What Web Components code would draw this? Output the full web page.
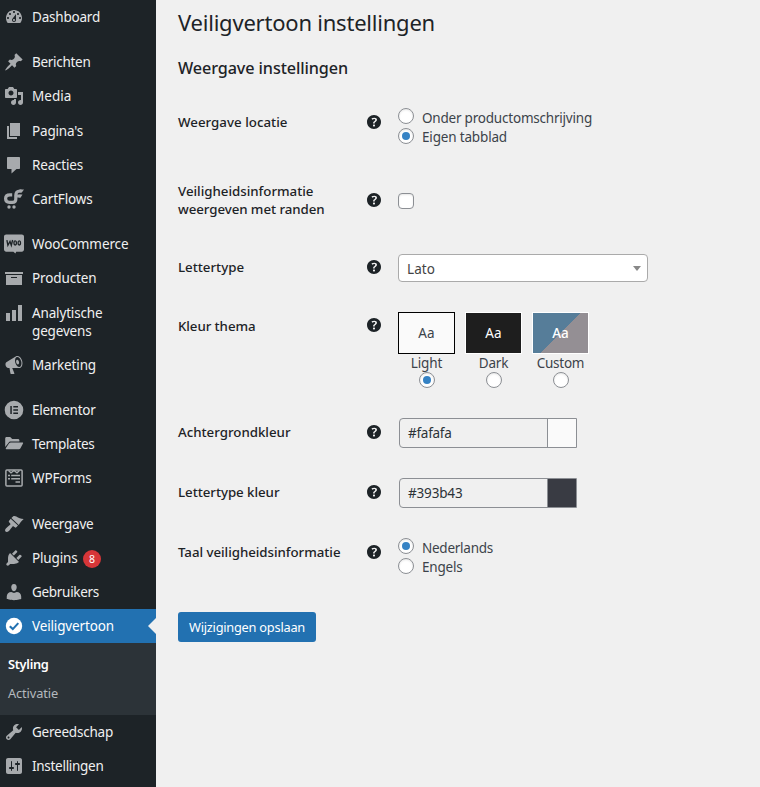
<!DOCTYPE html>
<html lang="nl">
<head>
<meta charset="utf-8">
<title>Veiligvertoon instellingen</title>
<style>
  html, body { margin: 0; height: 787px; overflow: hidden; background: #f0f0f0; }
  body { font: 14px/18px "Noto Sans", "Open Sans", sans-serif; }
</style>
</head>
<body>
<admin-page></admin-page>
<script>
const base = (el, html) => { el.attachShadow({ mode: 'open' }).innerHTML = html; };

/* One line of text spaced to a given advance width. */
customElements.define('ui-text', class extends HTMLElement {
  constructor() {
    super();
    base(this, `<style>:host{display:block;white-space:nowrap}span{display:inline-block}</style><span><slot></slot></span>`);
  }
  connectedCallback() {
    const w = parseFloat(this.getAttribute('w'));
    if (!w) return;
    const span = this.shadowRoot.querySelector('span');
    const now = span.getBoundingClientRect().width;
    this.style.letterSpacing = ((w - now) / this.textContent.length).toFixed(3) + 'px';
  }
});

const ICONS = {
  dashboard: '<path d="M3.76 16h12.48c1.1-1.37 1.76-3.11 1.76-5 0-4.42-3.58-8-8-8s-8 3.58-8 8c0 1.89.66 3.63 1.76 5zM10 4c.55 0 1 .45 1 1s-.45 1-1 1-1-.45-1-1 .45-1 1-1zM6 6c.55 0 1 .45 1 1s-.45 1-1 1-1-.45-1-1 .45-1 1-1zm8 0c.55 0 1 .45 1 1s-.45 1-1 1-1-.45-1-1 .45-1 1-1zm-5.37 5.55L12 7v6c0 1.1-.9 2-2 2s-2-.9-2-2c0-.57.24-1.08.63-1.45zM4 10c.55 0 1 .45 1 1s-.45 1-1 1-1-.45-1-1 .45-1 1-1zm12 0c.55 0 1 .45 1 1s-.45 1-1 1-1-.45-1-1 .45-1 1-1zm-5 3c0-.55-.45-1-1-1s-1 .45-1 1 .45 1 1 1 1-.45 1-1z"/>',
  post: '<path d="M10.44 3.02l1.82-1.82 6.36 6.35-1.83 1.82c-1.05-.68-2.48-.57-3.41.36l-.75.75c-.92.93-1.04 2.35-.35 3.41l-1.83 1.82-2.41-2.41-2.8 2.79c-.42.42-3.38 2.71-3.8 2.29s1.86-3.39 2.28-3.81l2.79-2.79L4.1 9.36l1.83-1.82c1.05.69 2.48.57 3.4-.36l.75-.75c.93-.92 1.05-2.35.36-3.41z"/>',
  media: '<path d="M13 11V4c0-.55-.45-1-1-1h-1.67L9 1H5L3.67 3H2c-.55 0-1 .45-1 1v7c0 .55.45 1 1 1h10c.55 0 1-.45 1-1zM7 4.5c1.38 0 2.5 1.12 2.5 2.5S8.38 9.5 7 9.5 4.5 8.38 4.5 7 5.62 4.5 7 4.5zM14 6h5v10.5c0 1.38-1.12 2.5-2.5 2.5S14 17.88 14 16.5s1.12-2.5 2.5-2.5c.17 0 .34.02.5.05V9h-3V6zm-4 8.05V13h2v3.5c0 1.38-1.12 2.5-2.5 2.5S7 17.88 7 16.5 8.12 14 9.5 14c.17 0 .34.02.5.05z"/>',
  page: '<path d="M6 15V2h10v13H6zm-1 1h8v2H3V5h2v11z"/>',
  comment: '<path d="M4 2h11c.6 0 1 .4 1 1v10c0 .6-.4 1-1 1h-2.500l-5 4.500V14H4c-.6 0-1-.4-1-1V3c0-.6.4-1 1-1z"/>',
  cartflows: '<path d="M8.200 5.800H6C3 5.800 1.600 7.400 1.600 9.600S3 13.400 5.400 13.400h3c2.200 0 3.400-1 3.400-3.200V6.400c0-2.900 1.500-4.400 4.300-4.400h1.400M11.800 7h4.600" fill="none" stroke="currentColor" stroke-width="3.200"/><path d="M15.500.4H20l-2.200 3.200h-2.500zM15.500 5.400h3l-1.800 3.200h-2z"/><circle cx="5" cy="18" r="1.700"/><circle cx="10" cy="18" r="1.700"/>',
  woo: '<path d="M2.200.4h15.600c1.200 0 2.200.9 2.200 2.200v12.900c0 1.200-.9 2.200-2.200 2.200h-5.600l-.8 1.800-2-1.800H2.200c-1.200 0-2.200-1-2.200-2.200V2.600C0 1.300 1 .4 2.200.4z"/><g fill="none" stroke="#1d2327" stroke-width="1.350"><path d="M2.900 6.100l1 5.200L6 7.500l1.300 3.800L8.600 6"/><ellipse cx="11.200" cy="8.900" rx="1.250" ry="2.100"/><ellipse cx="15.300" cy="8.900" rx="1.250" ry="2.100"/></g>',
  archive: '<path d="M19 4v2H1V4h18zM2 7h16v10H2V7zm11 3V9H7v1h6z"/>',
  chart: '<path d="M18 18V2h-4v16h4zm-6 0V7H8v11h4zm-6 0v-8H2v8h4z"/>',
  megaphone: '<path d="M18.15 5.94c.46 1.62.38 3.22-.02 4.48-.42 1.28-1.26 2.18-2.3 2.48-.16.06-.26.06-.4.06-.06.02-.12.02-.18.02-.06.02-.14.02-.22.02h-6.8l2.220 5.500c.02.14-.06.26-.14.34-.08.1-.24.16-.34.16H6.950c-.1 0-.26-.06-.34-.16-.08-.08-.16-.2-.14-.34l-1-5.500H4.250l-.02-.02c-.5.06-1.080-.18-1.540-.62s-.88-1.080-1.060-1.880c-.24-.8-.2-1.560-.02-2.200.18-.62.58-1.080 1.060-1.300l.02-.02 9-5.400c.1-.06.18-.1.24-.16.06-.04.14-.08.24-.12.16-.08.28-.12.5-.18 1.040-.3 2.240.1 3.220.98s1.840 2.240 2.260 3.860zm-2.580 5.980h-.02c.4-.1.74-.34 1.040-.7.58-.7.86-1.760.86-3.040 0-.64-.1-1.300-.28-1.980-.34-1.360-1.020-2.500-1.780-3.240s-1.680-1.100-2.460-.88c-.82.22-1.400.96-1.700 2-.32 1.040-.28 2.360.06 3.720.38 1.360 1 2.500 1.800 3.240.78.74 1.620 1.100 2.480.88zm-2.540-7.080c.22-.04.42-.02.62.04.38.16.76.48 1.020 1s.42 1.200.42 1.780c0 .3-.04.56-.12.8-.18.48-.44.84-.86.94-.34.1-.8-.06-1.140-.4s-.64-.86-.78-1.500c-.18-.62-.12-1.240.02-1.720s.48-.84.82-.94z"/>',
  elementor: '<path fill-rule="evenodd" d="M10 .7a9.300 9.300 0 1 0 0 18.600A9.300 9.300 0 0 0 10 .7zM6.300 6h1.500v8H6.300zM9.300 6H14v1.500H9.300zM9.300 9.250H14v1.500H9.300zM9.300 12.500H14V14H9.300z"/>',
  folder: '<path d="M1.200 13V4.400c0-.8.6-1.400 1.400-1.400h3.600l2 2h5.800c.8 0 1.400.6 1.400 1.400v1.200H6.700c-.9 0-1.700.4-2.100 1.200z"/><path d="M6.900 8.600h11.600c.6 0 .8.5.5 1l-2.700 4.800c-.3.500-.8.800-1.400.8H2.300c-.5 0-.8-.4-.5-.9l3.300-5c.4-.5 1.100-.7 1.800-.7z"/>',
  wpforms: '<rect x="1.900" y="1.900" width="16.200" height="16.200" rx="1" fill="none" stroke="currentColor" stroke-width="1.500"/><path d="M4.500 2.500L7 4.800 10 2.500l3 2.300 2.500-2.300" fill="none" stroke="currentColor" stroke-width="1.300"/><path d="M4 6.800h2v1.500H4zM7.200 6.800H16v1.500H7.200zM4 10h2v1.500H4zM7.200 10H16v1.500H7.200zM11.500 13.200H16v1.600h-4.500z"/>',
  brush: '<path d="M7.400 4.100L9 2.500c.9-.8 2.200-.6 3.300.1 2.300 1.600 4.400 2.500 7.400 2.500-1.800 1.400-3.200 3.300-4.900 5.900z"/><path d="M6.700 4.800l7.300 6.800-1.700 1.700c-.5.500-1 .5-1.500 0l-1.100-.9c-.4-.3-.8-.2-1.200.2-1.300 1.600-2.300 3.200-3.600 4.300-1.200 1-2.600 1.300-3.400.6-.8-.9-.4-2.200.6-3.300 1.100-1.200 2.600-2.200 4-3.500.5-.4.500-.9.100-1.300l-1.100-1.200c-.5-.5-.5-1 0-1.500z"/>',
  plug: '<path d="M13.110 4.360L9.870 7.600 8 5.730l3.240-3.240c.35-.34 1.050-.2 1.560.32.52.51.66 1.210.31 1.550zm-8 1.770l.91-1.120 9.010 9.010-1.190.84c-.71.71-2.630 1.160-3.820 1.160H6.140L4.900 17.260c-.59.59-1.540.59-2.120 0-.59-.58-.59-1.530 0-2.120l1.240-1.240v-3.880c0-1.130.4-3.190 1.090-3.890zm7.260 3.970l3.240-3.240c.34-.35 1.040-.21 1.550.31.52.51.66 1.210.31 1.550l-3.240 3.250z"/>',
  user: '<path d="M10 9.250c-2.270 0-2.730-3.440-2.730-3.440C7 4.020 7.820 2 9.970 2c2.160 0 2.980 2.020 2.710 3.810 0 0-.41 3.440-2.680 3.440zM10 11.100l2.700-1.100c2.600 0 4.500 1.900 4.500 4.500V17s-3.600 1.150-7.200 1.150S2.760 17 2.760 17v-2.500C2.760 12 4.700 10 7.300 10z"/>',
  check: '<circle cx="10" cy="10" r="8.200"/><path d="M5.800 10.200l3 2.900 5.500-6" fill="none" stroke="#2271b1" stroke-width="2.100"/>',
  wrench: '<path d="M16.680 9.770c-1.340 1.340-3.300 1.670-4.950.99l-5.410 6.520c-.99.99-2.590.99-3.580 0s-.99-2.590 0-3.570l6.520-5.420c-.68-1.650-.35-3.610.99-4.950 1.280-1.280 3.120-1.620 4.720-1.060l-2.890 2.890 2.820 2.820 2.860-2.870c.53 1.580.18 3.390-1.080 4.650zM3.810 16.210c.4.39 1.040.39 1.430 0 .4-.4.4-1.040 0-1.430-.39-.4-1.030-.4-1.430 0-.39.39-.39 1.030 0 1.430z"/>',
  sliders: '<path d="M18 16V4c0-1.100-.9-2-2-2H4c-1.100 0-2 .9-2 2v12c0 1.100.9 2 2 2h12c1.100 0 2-.9 2-2zM8 11h1c.55 0 1 .45 1 1s-.45 1-1 1H8v1.500c0 .28-.22.5-.5.5s-.5-.22-.5-.5V13H6c-.55 0-1-.45-1-1s.45-1 1-1h1V5.500c0-.28.22-.5.5-.5s.5.22.5.5V11zm5-2h-1c-.55 0-1-.45-1-1s.45-1 1-1h1V5.500c0-.28.22-.5.5-.5s.5.22.5.5V7h1c.55 0 1 .45 1 1s-.45 1-1 1h-1v5.500c0 .28-.22.5-.5.5s-.5-.22-.5-.5V9z"/>',
  help: '<path d="M17 10c0-3.870-3.140-7-7-7-3.870 0-7 3.130-7 7s3.130 7 7 7c3.860 0 7-3.130 7-7zm-6.300 1.480H9.140v-.43c0-.38.08-.7.24-.98s.46-.57.88-.89c.41-.29.68-.53.81-.71.14-.18.2-.39.2-.62 0-.25-.09-.44-.28-.58-.19-.13-.45-.19-.79-.19-.58 0-1.250.19-2 .57l-.64-1.280c.87-.49 1.800-.74 2.770-.74.81 0 1.450.2 1.920.58.48.39.71.91.71 1.550 0 .43-.09.8-.29 1.110-.19.32-.57.67-1.110 1.060-.38.28-.61.49-.71.63-.1.15-.15.34-.15.57v.35zm-1.470 2.740c-.18-.17-.27-.42-.27-.73 0-.33.08-.58.26-.75s.43-.25.77-.25c.32 0 .57.09.75.26s.27.42.27.74c0 .3-.09.55-.27.72-.18.18-.43.27-.75.27-.33 0-.58-.09-.76-.26z"/>'
};
customElements.define('ui-icon', class extends HTMLElement {
  constructor() {
    super();
    base(this, `<style>:host{display:block;width:20px;height:20px}svg{display:block;fill:currentColor;overflow:visible}</style>
      <svg width="20" height="20" viewBox="0 0 20 20">${ICONS[this.getAttribute('name')] || ''}</svg>`);
  }
});

customElements.define('menu-item', class extends HTMLElement {
  constructor() {
    super();
    base(this, `<style>
      :host{display:flex;align-items:flex-start;position:relative;box-sizing:border-box;min-height:34.2px;padding:8px 0 8px 4px;color:#f0f0f1;font-size:13.5px;line-height:18px}
      ui-icon{color:#a7aaad;margin:-1px 8px -1px 0;flex:none}
      :host([sep]){margin-top:11px}
      :host([icon="brush"]){margin-top:11.700px}
      :host([icon="user"]){margin-top:-.7px}
      :host([active]){background:#2271b1;color:#fff}
      :host([active]) ui-icon{color:#fff}
      :host([active])::after{content:"";position:absolute;right:0;top:9px;border:8px solid transparent;border-right-color:#f0f0f0;border-left-width:0}
    </style><ui-icon name="${this.getAttribute('icon')}"></ui-icon><div><slot></slot></div><slot name="badge"></slot>`);
  }
});

customElements.define('count-badge', class extends HTMLElement {
  constructor() {
    super();
    base(this, `<style>:host{display:block;width:18px;height:18px;margin:1px 0 -1px 5.500px;border-radius:9px;background:#d63638;color:#fff;font-size:10.5px;line-height:18px;text-align:center}</style><slot></slot>`);
  }
});

customElements.define('sub-menu', class extends HTMLElement {
  constructor() {
    super();
    base(this, `<style>:host{display:block;box-sizing:border-box;height:72px;padding:12px 0 0 8px;background:#2c3338;color:#b4b9be;font-size:12.8px;line-height:18px}
      ::slotted(*){margin-bottom:11px}
      ::slotted(.cur){color:#fff;font-weight:600}</style><slot></slot>`);
  }
});

customElements.define('side-menu', class extends HTMLElement {
  constructor() {
    super();
    const rows = [
      ['dashboard', 0, ['Dashboard', 68]], ['post', 1, ['Berichten', 58.500]], ['media', 0, ['Media', 39.500]],
      ['page', 0, ["Pagina's", 51]], ['comment', 0, ['Reacties', 51]], ['cartflows', 0, ['CartFlows', 60.500]],
      ['woo', 1, ['WooCommerce', 96.500]], ['archive', 0, ['Producten', 64.500]],
      ['chart', 0, ['Analytische', 70.500], ['gegevens', 59.500]], ['megaphone', 0, ['Marketing', 64]],
      ['elementor', 1, ['Elementor', 63.500]], ['folder', 0, ['Templates', 62.500]], ['wpforms', 0, ['WPForms', 59.500]],
      ['brush', 1, ['Weergave', 61.500]], ['plug', 0, ['Plugins', 45.500]], ['user', 0, ['Gebruikers', 67]],
      ['check', 0, ['Veiligvertoon', 82]], ['wrench', 0, ['Gereedschap', 81]], ['sliders', 0, ['Instellingen', 71.500]]
    ];
    base(this, `<style>:host{display:block;background:#1d2327}</style>` + rows.map(([i, sep, ...t]) => {
      const badge = i === 'plug' ? '<count-badge slot="badge">8</count-badge>' : '';
      return `<menu-item icon="${i}"${sep ? ' sep' : ''}${i === 'check' ? ' active' : ''}>${t.map(([s, w]) => `<ui-text w="${w}">${s}</ui-text>`).join('')}${badge}</menu-item>` +
        (i === 'check' ? '<sub-menu><ui-text class="cur" w="40.500">Styling</ui-text><ui-text w="50">Activatie</ui-text></sub-menu>' : '');
    }).join(''));
  }
});

customElements.define('radio-dot', class extends HTMLElement {
  constructor() {
    super();
    base(this, `<style>:host{display:grid;place-items:center;box-sizing:border-box;width:16px;height:16px;flex:none;border:1px solid #8c8f94;border-radius:50%;background:#fff;box-shadow:inset 0 1px 2px rgba(0,0,0,.1)}
      :host([square]){border-radius:4px}
      i{display:none;width:8px;height:8px;border-radius:50%;background:#3582c4}
      :host([on]) i{display:block}</style><i></i>`);
  }
});

customElements.define('radio-list', class extends HTMLElement {
  constructor() {
    super();
    const items = JSON.parse(this.getAttribute('items'));
    base(this, `<style>:host{display:grid;grid-template-columns:16px auto;column-gap:8px;color:#3c434a;font-size:13.500px}
      .dots{display:grid;gap:4px;align-content:start}.labels{padding-top:1px;line-height:19px}</style>
      <div class="dots">${items.map(x => `<radio-dot${x[2] ? ' on' : ''}></radio-dot>`).join('')}</div>
      <div class="labels">${items.map(x => `<ui-text w="${x[1]}">${x[0]}</ui-text>`).join('')}</div>`);
  }
});

customElements.define('select-box', class extends HTMLElement {
  constructor() {
    super();
    base(this, `<style>:host{display:flex;align-items:center;justify-content:space-between;box-sizing:border-box;width:250px;height:28px;padding:2px 6px 0 8px;border:1px solid #aaa;border-radius:4px;background:#fff;color:#444;font-size:13.500px}
      i{border:4px solid transparent;border-top:5px solid #888;border-bottom:0;margin-top:-2px}</style><slot></slot><i></i>`);
  }
});

customElements.define('theme-card', class extends HTMLElement {
  constructor() {
    super();
    base(this, `<style>:host{display:flex;flex-direction:column;align-items:center;width:57px;color:#3c434a;font-size:13.500px}
      .box{display:grid;place-items:center;box-sizing:border-box;width:57px;height:42px;border:1px solid #fff}
      .Light{background:#fafafa;border-color:#000}.Dark{background:#1e1e1e;color:#fff}
      .Custom{background:linear-gradient(135deg,#567d99 50%,#948f94 50%);color:#fff;font-weight:500}</style>
      <div class="box ${this.getAttribute('name')}"><ui-text w="16.500">Aa</ui-text></div>
      <ui-text w="${this.getAttribute('w')}">${this.getAttribute('name')}</ui-text>
      <radio-dot${this.hasAttribute('on') ? ' on' : ''}></radio-dot>`);
  }
});

customElements.define('color-field', class extends HTMLElement {
  constructor() {
    super();
    base(this, `<style>:host{display:flex;box-sizing:border-box;width:178px;height:30px;margin-left:1px;border:1px solid #8c8f94;border-radius:4px 0 0 4px;overflow:hidden;color:#2c3338;font-size:13.500px;line-height:29px}
      .v{flex:1;padding-left:8px}.s{width:28px;border-left:1px solid #8c8f94;background:${this.getAttribute('color')}}</style>
      <div class="v"><slot></slot></div><div class="s"></div>`);
  }
});

/* Label, help icon and control; --lift raises the first two against the control. */
customElements.define('form-row', class extends HTMLElement {
  constructor() {
    super();
    base(this, `<style>:host{display:grid;grid-template-columns:186px 34px auto;align-items:center}
      .l{color:#1d2327;font-size:13.300px;font-weight:500;line-height:18px}
      ui-icon{color:#1d2327}
      .l,ui-icon{margin-bottom:var(--lift,0)}
      :host([top]){align-items:start}
      :host([top]) .l{margin-top:5px}
      :host([top]) ui-icon{margin-top:3px}</style>
      <div class="l"><slot name="label"></slot></div><ui-icon name="help"></ui-icon><div><slot></slot></div>`);
  }
});

customElements.define('save-button', class extends HTMLElement {
  constructor() {
    super();
    base(this, `<style>:host{display:block;box-sizing:border-box;width:138px;height:30px;padding-left:11px;border-radius:3px;background:#2271b1;color:#fff;font-size:12.800px;line-height:30px}</style><slot></slot>`);
  }
});

customElements.define('settings-form', class extends HTMLElement {
  constructor() {
    super();
    base(this, `<style>
      :host{display:block;padding:7px 0 0 22px}
      h1,h2{margin:0;color:#1d2327}
      h1{font-size:22px;font-weight:400;line-height:30px}
      h2{font-size:16.200px;font-weight:500;line-height:24px;margin:19px 0 8px}
      .themes{display:flex;gap:10px}
      .up{--lift:2px}
    </style>
    <h1><ui-text w="257">Veiligvertoon instellingen</ui-text></h1>
    <h2><ui-text w="170">Weergave instellingen</ui-text></h2>
    <form-row style="height:68px"><ui-text slot="label" w="109.500">Weergave locatie</ui-text>
      <radio-list style="margin-top:11px" items='[["Onder productomschrijving",170],["Eigen tabblad",85,1]]'></radio-list></form-row>
    <form-row style="height:88px"><ui-text slot="label" w="135.500">Veiligheidsinformatie</ui-text><ui-text slot="label" w="146.500">weergeven met randen</ui-text>
      <radio-dot square style="margin-top:2px"></radio-dot></form-row>
    <form-row class="up" style="height:48px"><ui-text slot="label" w="66">Lettertype</ui-text><select-box><ui-text w="28">Lato</ui-text></select-box></form-row>
    <form-row top style="height:90px;padding-top:20px">
      <ui-text slot="label" w="77.500">Kleur thema</ui-text>
      <div class="themes"><theme-card name="Light" w="31.500" on></theme-card><theme-card name="Dark" w="29.500"></theme-card><theme-card name="Custom" w="47.500"></theme-card></div></form-row>
    <form-row class="up" style="height:61px"><ui-text slot="label" w="112.500">Achtergrondkleur</ui-text><color-field color="#fafafa"><ui-text w="43.500">#fafafa</ui-text></color-field></form-row>
    <form-row class="up" style="height:60px"><ui-text slot="label" w="101.500">Lettertype kleur</ui-text><color-field color="#393b43"><ui-text w="54.500">#393b43</ui-text></color-field></form-row>
    <form-row class="up" style="height:60px"><ui-text slot="label" w="162.500">Taal veiligheidsinformatie</ui-text>
      <radio-list style="margin-top:8px" items='[["Nederlands",71,1],["Engels",40.500]]'></radio-list></form-row>
    <save-button style="margin-top:29px"><ui-text w="116">Wijzigingen opslaan</ui-text></save-button>`);
  }
});

customElements.define('admin-page', class extends HTMLElement {
  constructor() {
    super();
    base(this, `<style>:host{display:grid;grid-template-columns:156px 1fr;height:787px}</style><side-menu></side-menu><settings-form></settings-form>`);
  }
});
</script>
</body>
</html>
